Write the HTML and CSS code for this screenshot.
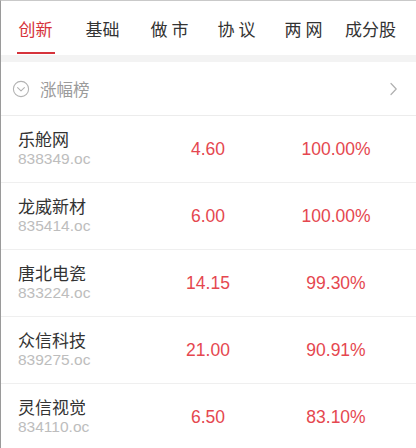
FILE: index.html
```html
<!DOCTYPE html>
<html lang="zh-CN">
<head>
<meta charset="utf-8">
<title>创新</title>
<link rel="stylesheet" href="styles.css">
</head>
<body>
<div class="page">
  <nav class="tabs">
    <div class="tab active"><span class="label">创新</span></div>
    <div class="tab"><span class="label">基础</span></div>
    <div class="tab"><span class="label">做 市</span></div>
    <div class="tab"><span class="label">协 议</span></div>
    <div class="tab"><span class="label">两 网</span></div>
    <div class="tab"><span class="label">成分股</span></div>
  </nav>
  <div class="band"></div>
  <div class="sub">
    <svg class="sub-icon" width="18" height="18" viewBox="0 0 18 18">
      <circle cx="9" cy="9" r="7.6" fill="none" stroke="#b3b3b3" stroke-width="1.1"/>
      <path d="M5.6 7.6 L9 10.8 L12.4 7.6" fill="none" stroke="#b3b3b3" stroke-width="1.1" stroke-linecap="round" stroke-linejoin="round"/>
    </svg>
    <span class="sub-title">涨幅榜</span>
    <svg class="sub-arrow" width="9" height="14" viewBox="0 0 9 14">
      <path d="M2 1.5 L7.2 7 L2 12.5" fill="none" stroke="#b0b0b0" stroke-width="1.2" stroke-linecap="round" stroke-linejoin="round"/>
    </svg>
  </div>
  <div class="list">
    <div class="row">
      <div class="stock"><div class="name">乐舱网</div><div class="code">838349.oc</div></div>
      <div class="price">4.60</div>
      <div class="pct">100.00%</div>
    </div>
    <div class="row">
      <div class="stock"><div class="name">龙威新材</div><div class="code">835414.oc</div></div>
      <div class="price">6.00</div>
      <div class="pct">100.00%</div>
    </div>
    <div class="row">
      <div class="stock"><div class="name">唐北电瓷</div><div class="code">833224.oc</div></div>
      <div class="price">14.15</div>
      <div class="pct">99.30%</div>
    </div>
    <div class="row">
      <div class="stock"><div class="name">众信科技</div><div class="code">839275.oc</div></div>
      <div class="price">21.00</div>
      <div class="pct">90.91%</div>
    </div>
    <div class="row">
      <div class="stock"><div class="name">灵信视觉</div><div class="code">834110.oc</div></div>
      <div class="price">6.50</div>
      <div class="pct">83.10%</div>
    </div>
  </div>
</div>
</body>
</html>
```
FILE: styles.css
```css
* { box-sizing: border-box; }
html, body { margin: 0; padding: 0; background: #fff; }
body {
  width: 416px;
  height: 448px;
  overflow: hidden;
  font-family: "Liberation Sans", "Noto Sans CJK SC", sans-serif;
}
.page {
  border-top: 1px solid #c9c9c9;
  border-left: 1px solid #9a9a9a;
  height: 448px;
}
.tabs {
  display: flex;
  height: 54px;
  padding-left: 1px;
}
.tab {
  width: 67px;
  display: flex;
  flex-direction: column;
  align-items: center;
  justify-content: flex-end;
}
.label {
  font-family: "Noto Sans CJK SC", sans-serif;
  font-size: 17px;
  line-height: 24px;
  color: #333;
  padding: 0 2px 11px;
  margin-bottom: 1px;
  border-bottom: 2px solid transparent;
  white-space: pre;
}
.tab.active .label {
  color: #d6333b;
  border-bottom-color: #d6333b;
}
.band {
  height: 7px;
  background: #f3f3f3;
}
.sub {
  height: 54px;
  display: flex;
  align-items: center;
  padding: 0 18px 0 11px;
  border-bottom: 1px solid #ececec;
}
.sub-icon { flex: none; }
.sub-title {
  font-family: "Noto Sans CJK SC", sans-serif;
  font-size: 16.5px;
  color: #9b9b9b;
  margin-left: 10px;
  flex: 1;
}
.sub-arrow { flex: none; }
.row {
  display: grid;
  grid-template-columns: 130px 120px 136px;
  align-items: center;
  height: 67px;
  padding-left: 17px;
  border-bottom: 1px solid #efefef;
}
.name {
  font-family: "Noto Sans CJK SC", sans-serif;
  font-size: 17px;
  line-height: 20px;
  color: #333;
}
.code {
  font-size: 15.5px;
  line-height: 20px;
  color: #bdbdbd;
}
.price, .pct {
  text-align: center;
  font-size: 17.5px;
  color: #e5474f;
}
```
